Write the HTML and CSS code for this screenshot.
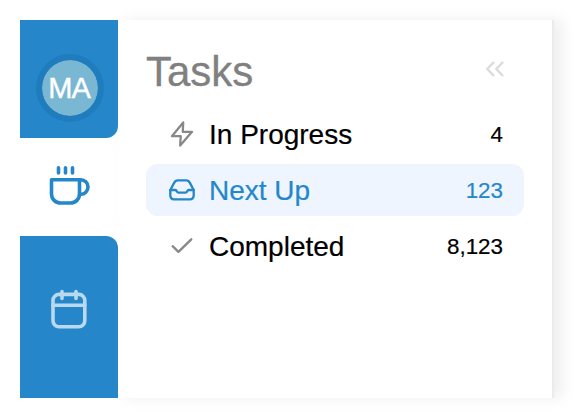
FILE: index.html
```html
<!DOCTYPE html>
<html lang="en">
<head>
<meta charset="utf-8">
<title>Tasks</title>
<link rel="stylesheet" href="styles.css">
</head>
<body>
<div class="app">
  <nav class="rail">
    <div class="rail-top"><div class="avatar">MA</div></div>
    <div class="rail-active">
      <svg class="cup" viewBox="0 0 44 44" fill="none" stroke="currentColor" stroke-width="3.6" stroke-linecap="round" stroke-linejoin="round">
        <path d="M3.5 15.7H31.5V30a9 9 0 0 1-9 9h-10a9 9 0 0 1-9-9Z"/>
        <path d="M31.5 15.7h1.2a7.3 7.3 0 0 1 0 14.6h-1.2M10.5 3.8v5.2M17.5 3.8v5.2M24.5 3.8v5.2"/>
      </svg>
    </div>
    <div class="rail-rest">
      <svg class="calendar" viewBox="0 0 40 44" fill="none" stroke="currentColor" stroke-width="3.6" stroke-linecap="round">
        <rect x="5" y="7.4" width="31.8" height="32.4" rx="6"/>
        <path d="M5 18.3h31.8M14 4.5v7M28 4.5v7"/>
      </svg>
    </div>
  </nav>
  <main class="panel">
    <header class="head">
      <h1>Tasks</h1>
      <svg class="collapse" viewBox="0 0 20 18" fill="none" stroke="currentColor" stroke-width="2.4" stroke-linecap="round" stroke-linejoin="round">
        <path d="M8.4 2.6 2.2 9l6.2 6.4M17.4 2.6 11.2 9l6.2 6.4"/>
      </svg>
    </header>
    <ul class="list">
      <li class="item">
        <svg class="icon" viewBox="0 0 28 28" fill="none" stroke="currentColor" stroke-width="2.3" stroke-linejoin="round">
          <path d="M15.2 2.4 3.9 16.2H12.7L12.2 25.6 24 11.8H14.8Z"/>
        </svg>
        <span class="label">In Progress</span><span class="count">4</span>
      </li>
      <li class="item selected">
        <svg class="icon" viewBox="0 0 28 28" fill="none" stroke="currentColor" stroke-width="2.3" stroke-linecap="round" stroke-linejoin="round">
          <path d="M2.3 14 6.1 6.9Q7.3 4.4 9.8 4.4h8.4q2.5 0 3.7 2.5l3.8 7.1v5.8a3.6 3.6 0 0 1-3.6 3.6H5.9a3.6 3.6 0 0 1-3.6-3.6Z"/>
          <path d="M2.3 14H7q1 0 1.5.9 1 1.8 2.1 1.8h6.8q1.1 0 2.1-1.8.5-.9 1.5-.9h4.7"/>
        </svg>
        <span class="label">Next Up</span><span class="count">123</span>
      </li>
      <li class="item">
        <svg class="icon" viewBox="0 0 28 28" fill="none" stroke="currentColor" stroke-width="2.3" stroke-linecap="round" stroke-linejoin="round">
          <path d="M4.6 14.2 10.4 19.8 23.3 7.3"/>
        </svg>
        <span class="label">Completed</span><span class="count">8,123</span>
      </li>
    </ul>
  </main>
</div>
</body>
</html>
```

FILE: styles.css
```css
* { box-sizing: border-box; }
body {
  margin: 0;
  padding: 20px;
  background: #fff;
  font-family: "Liberation Sans", Arial, sans-serif;
  overflow: hidden;
}
svg { display: block; flex: none; }
.app { display: flex; width: 534px; height: 378px; }
.rail {
  display: flex;
  flex-direction: column;
  width: 98px;
  position: relative;
  z-index: 1;
}
.rail-top {
  height: 118px;
  padding: 34px 0 0 16px;
  background: #2587ca;
  border-bottom-right-radius: 12px;
}
.avatar {
  width: 68px;
  height: 68px;
  border: 6px solid #207dbd;
  border-radius: 50%;
  background: #7ab7d3;
  background-clip: padding-box;
  color: #fff;
  font-size: 29px;
  letter-spacing: -1px;
  text-indent: -2px;
  line-height: 57px;
  text-align: center;
  -webkit-text-stroke: .4px currentColor;
}
.rail-active { height: 98px; padding: 26px 0 0 28px; color: #2587ca; }
.cup { width: 44px; height: 44px; }
.rail-rest {
  flex: 1;
  padding: 51px 0 0 28px;
  background: #2587ca;
  border-top-right-radius: 12px;
  color: #b9d9ee;
}
.calendar { width: 40px; height: 44px; }
.panel {
  flex: 1;
  padding: 26px 28px 0;
  background: #fff;
  border-right: 2px solid #ebebeb;
  box-shadow: 8px 0 14px rgba(0, 0, 0, .07);
}
.head {
  display: flex;
  justify-content: space-between;
  height: 62px;
  padding-right: 19px;
  color: #808080;
}
h1 {
  margin: 0;
  font-size: 42px;
  font-weight: 400;
  line-height: 52px;
  -webkit-text-stroke: .3px currentColor;
}
.collapse { width: 20px; height: 18px; margin-top: 14px; color: #dcdcdc; }
.list {
  display: flex;
  flex-direction: column;
  gap: 4px;
  margin: 0;
  padding: 0;
  list-style: none;
}
.item {
  display: flex;
  align-items: center;
  height: 52px;
  padding: 0 21px 0 22px;
  border-radius: 12px;
}
.icon { width: 28px; height: 28px; margin-right: 13px; color: #888; }
.label, .count { -webkit-text-stroke: .2px currentColor; }
.label { flex: 1; font-size: 28px; line-height: 52px; padding-top: 2px; }
.count { font-size: 22.4px; line-height: 52px; padding-top: 1px; }
.selected { background: #eef5ff; color: #2587ca; }
.selected .icon { color: #2587ca; }
```
